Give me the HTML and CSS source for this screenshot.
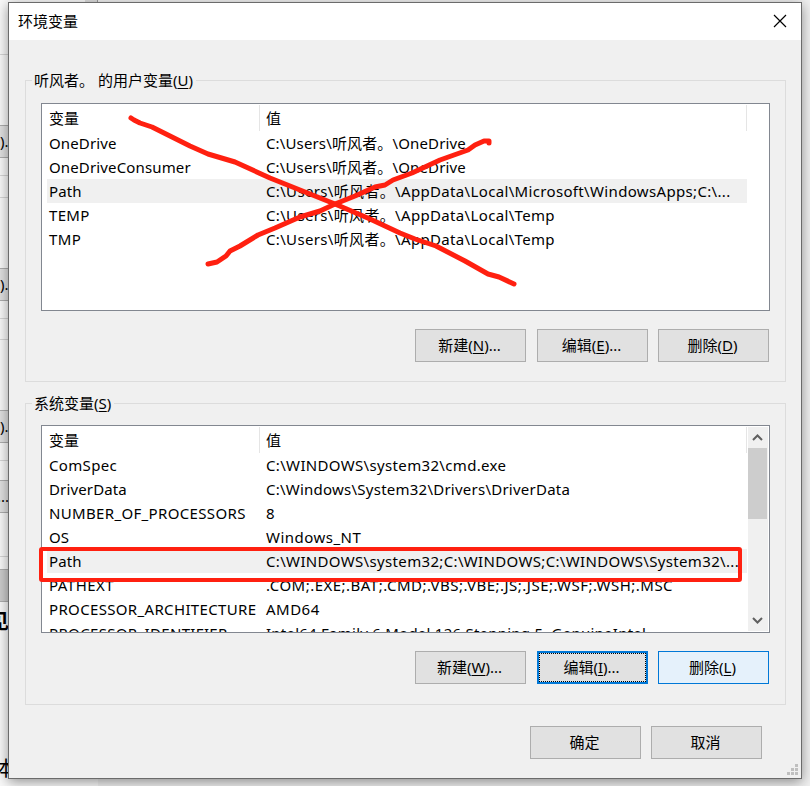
FILE: index.html
```html
<!DOCTYPE html>
<html lang="zh-CN">
<head>
    <meta charset="UTF-8">
    <meta name="viewport" content="width=device-width, initial-scale=1.0">
    <title>环境变量</title>
    <link rel="stylesheet" href="styles.css">
</head>
<body>
    <!-- Window behind the dialog -->
    <div class="backdrop">
        <div class="back-right"></div>
        <div class="back-edge"></div>
        <div class="back-line line-1"></div>
        <div class="back-button button-1">).</div>
        <div class="back-line line-2"></div>
        <div class="back-line line-3"></div>
        <div class="back-button button-2">).</div>
        <div class="back-line line-4"></div>
        <div class="back-line line-5"></div>
        <div class="back-button button-3">).</div>
        <div class="back-line line-6"></div>
        <div class="back-button button-4">...</div>
        <div class="back-line line-7"></div>
        <div class="back-button button-5"></div>
        <div class="back-text text-1">见</div>
        <div class="back-text text-2">本</div>
    </div>

    <div class="dialog">
        <div class="title-bar">
            <span>环境变量</span>
            <svg class="close" width="14" height="14" viewBox="0 0 14 14">
                <path d="M1 1L13 13M13 1L1 13"/>
            </svg>
        </div>

        <div class="content">
            <fieldset class="group">
                <legend>听风者。&nbsp;的用户变量(<u>U</u>)</legend>
                <div class="list">
                    <div class="list-main">
                        <div class="list-header"><span>变量</span><span>值</span></div>
                        <div class="row"><span>OneDrive</span><span>C:\Users\听风者。\OneDrive</span></div>
                        <div class="row"><span>OneDriveConsumer</span><span>C:\Users\听风者。\OneDrive</span></div>
                        <div class="row selected"><span>Path</span><span class="wide">C:\Users\听风者。\AppData\Local\Microsoft\WindowsApps;C:\...</span></div>
                        <div class="row"><span class="wide">TEMP</span><span class="wide">C:\Users\听风者。\AppData\Local\Temp</span></div>
                        <div class="row"><span class="wide">TMP</span><span class="wide">C:\Users\听风者。\AppData\Local\Temp</span></div>
                    </div>
                </div>
                <div class="buttons">
                    <button>新建(<u>N</u>)...</button>
                    <button>编辑(<u>E</u>)...</button>
                    <button class="last">删除(<u>D</u>)</button>
                </div>
            </fieldset>

            <fieldset class="group system">
                <legend>系统变量(<u>S</u>)</legend>
                <div class="list">
                    <div class="list-main">
                        <div class="list-header"><span>变量</span><span>值</span></div>
                        <div class="row"><span class="wide">ComSpec</span><span class="wide">C:\WINDOWS\system32\cmd.exe</span></div>
                        <div class="row"><span>DriverData</span><span class="medium">C:\Windows\System32\Drivers\DriverData</span></div>
                        <div class="row"><span class="wide">NUMBER_OF_PROCESSORS</span><span>8</span></div>
                        <div class="row"><span>OS</span><span class="wider">Windows_NT</span></div>
                        <div class="row selected"><span>Path</span><span class="wide">C:\WINDOWS\system32;C:\WINDOWS;C:\WINDOWS\System32\...</span></div>
                        <div class="row"><span class="wider">PATHEXT</span><span class="wider">.COM;.EXE;.BAT;.CMD;.VBS;.VBE;.JS;.JSE;.WSF;.WSH;.MSC</span></div>
                        <div class="row"><span class="wide">PROCESSOR_ARCHITECTURE</span><span class="wider">AMD64</span></div>
                        <div class="row"><span class="wide">PROCESSOR_IDENTIFIER</span><span class="medium">Intel64 Family 6 Model 126 Stepping 5, GenuineIntel</span></div>
                    </div>
                    <div class="scrollbar">
                        <svg width="19" height="21" viewBox="0 0 19 21"><path d="M5 13L9.5 8.5L14 13"/></svg>
                        <div class="thumb"></div>
                        <svg class="down" width="19" height="21" viewBox="0 0 19 21"><path d="M5 8L9.5 12.5L14 8"/></svg>
                    </div>
                </div>
                <div class="buttons">
                    <button>新建(<u>W</u>)...</button>
                    <button class="focused">编辑(<u>I</u>)...</button>
                    <button class="last hovered">删除(<u>L</u>)</button>
                </div>
            </fieldset>

            <div class="footer">
                <button>确定</button>
                <button>取消</button>
            </div>
        </div>

        <svg class="grip" width="11" height="11" viewBox="0 0 11 11">
            <path d="M8 0h3v3h-3zM4 4h3v3h-3zM8 4h3v3h-3zM0 8h3v3h-3zM4 8h3v3h-3zM8 8h3v3h-3z"/>
        </svg>
    </div>

    <!-- Red pen marks -->
    <svg class="marks" width="810" height="786" viewBox="0 0 810 786">
        <path class="pen" d="M131 118L134 120L140 123L152 127L170 136L190 146L208 154L235 162L270 178L300 190L335 204L370 219L400 233L415 239L436 246L465 261L488 274L499 277L514 284"/>
        <path class="pen" d="M489 143L489 141L484 141L475 145L468 150L440 160L412 173L393 180L385 185L375 187L355 196L335 204L320 211L300 217L275 228L258 235L240 246L230 251L226 256L217 262L208 264"/>
        <rect x="41" y="549" width="699" height="31" rx="1"/>
    </svg>
</body>
</html>
```

FILE: styles.css
```css
* {
    box-sizing: border-box;
}

body {
    margin: 0;
    padding: 2px 8px 7px;
    height: 786px;
    overflow: hidden;
    position: relative;
    font-family: "Noto Sans", "Noto Sans CJK SC", sans-serif;
    font-size: 15px;
    color: #000;
    background-color: #f9f9f9;
}

u {
    text-underline-offset: 2px;
    text-decoration-thickness: 1px;
    text-decoration-skip-ink: none;
}

/* Window behind the dialog */
.backdrop {
    position: absolute;
    inset: 0;
    overflow: hidden;
}

.back-right {
    position: absolute;
    top: 0;
    left: 98px;
    right: 0;
    height: 786px;
    background-color: #f0f0f0;
}

.back-edge {
    position: absolute;
    top: 0;
    left: 85px;
    width: 13px;
    height: 2px;
    background-color: #dcdcdc;
    border-right: 1px solid #999;
}

.back-line {
    position: absolute;
    left: 0;
    width: 8px;
    height: 1px;
    background-color: #d5d5d5;
}

.line-1 { top: 54px; }
.line-2 { top: 175px; }
.line-3 { top: 197px; }
.line-4 { top: 318px; }
.line-5 { top: 339px; }
.line-6 { top: 460px; }
.line-7 { top: 556px; }

.back-button {
    position: absolute;
    left: 0;
    width: 40px;
    height: 33px;
    line-height: 30px;
    border: 1px solid #adadad;
    border-left: none;
    background-color: #e1e1e1;
}

.button-1 { top: 125px; }
.button-2 { top: 268px; }
.button-3 { top: 410px; }
.button-4 { top: 480px; left: -3px; }
.button-5 { top: 569px; background-color: #ccc; }

.back-text {
    position: absolute;
    font-size: 20px;
    line-height: 24px;
}

.text-1 { top: 610px; left: -11px; font-weight: bold; }
.text-2 { top: 757px; left: -4px; }

/* Dialog */
.dialog {
    position: relative;
    width: 794px;
    height: 777px;
    border: 1px solid #6b6b6b;
    background-color: #f0f0f0;
    box-shadow: 0 3px 12px rgba(0, 0, 0, 0.42);
}

.title-bar {
    display: flex;
    align-items: center;
    justify-content: space-between;
    height: 37px;
    padding: 0 14px 2px 9px;
    background-color: #fff;
}

.close {
    fill: none;
    stroke: #000;
    stroke-width: 1.2;
}

.content {
    padding: 28px 15px 0 16px;
}

.group {
    height: 314px;
    min-width: 0;
    margin: 0 0 9px;
    padding: 11px 15px 0;
    border: 1px solid #dcdcdc;
}

.system {
    padding-top: 10px;
}

.group legend {
    height: 24px;
    margin-left: -9px;
    padding: 0 3px 0 2px;
    line-height: 24px;
}

.list {
    display: flex;
    width: 729px;
    height: 208px;
    overflow: hidden;
    border: 1px solid #828790;
    background-color: #fff;
}

.list-main {
    width: 705px;
    flex-shrink: 0;
    padding-left: 5px;
}

.list-header,
.row {
    display: grid;
    grid-template-columns: 217px 1fr;
    white-space: nowrap;
    padding-left: 2px;
}

.list-header {
    height: 27px;
    line-height: 29px;
    padding-bottom: 1px;
    background: linear-gradient(#e5e5e5, #e5e5e5) 212px 1px / 1px 26px no-repeat,
                linear-gradient(#e5e5e5, #e5e5e5) 699px 1px / 1px 26px no-repeat;
}

.row {
    height: 24px;
    line-height: 24px;
    letter-spacing: 0.14px;
}

.medium {
    letter-spacing: 0.24px;
}

.wide {
    letter-spacing: 0.34px;
}

.wider {
    letter-spacing: 0.48px;
}

.selected {
    background-color: #f0f0f0;
}

.scrollbar {
    display: flex;
    flex-direction: column;
    width: 20px;
    margin: 1px 0 1px 1px;
    background-color: #f0f0f0;
}

.scrollbar svg {
    fill: none;
    stroke: #606060;
    stroke-width: 2;
}

.thumb {
    width: 19px;
    height: 71px;
    background-color: #cdcdcd;
}

.scrollbar .down {
    margin-top: auto;
}

.buttons {
    display: flex;
    justify-content: flex-end;
    gap: 11px;
    margin-top: 18px;
    padding-right: 1px;
}

button {
    width: 111px;
    height: 33px;
    padding: 0 2px 2px 0;
    font: inherit;
    color: #000;
    border: 1px solid #adadad;
    background-color: #e1e1e1;
}

.last {
    margin-left: -1px;
}

.focused {
    border: 2px solid #0078d7;
    outline: 1px dotted #000;
    outline-offset: -3px;
}

.hovered {
    border-color: #0078d7;
    background-color: #e5f1fb;
}

.footer {
    display: flex;
    justify-content: flex-end;
    gap: 10px;
    margin-top: 21px;
    padding-right: 24px;
}

.grip {
    position: absolute;
    right: 3px;
    bottom: 3px;
    fill: #bfbfbf;
}

.marks {
    position: absolute;
    top: 0;
    left: 0;
    fill: none;
    stroke: #ff2010;
    stroke-width: 4;
    stroke-linecap: round;
    stroke-linejoin: round;
}

.pen {
    stroke-width: 5;
}
```
